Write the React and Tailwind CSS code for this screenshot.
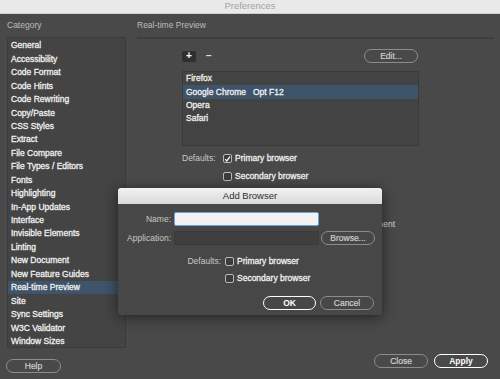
import React from "react";

const categories = [
    "General",
    "Accessibility",
    "Code Format",
    "Code Hints",
    "Code Rewriting",
    "Copy/Paste",
    "CSS Styles",
    "Extract",
    "File Compare",
    "File Types / Editors",
    "Fonts",
    "Highlighting",
    "In-App Updates",
    "Interface",
    "Invisible Elements",
    "Linting",
    "New Document",
    "New Feature Guides",
    "Real-time Preview",
    "Site",
    "Sync Settings",
    "W3C Validator",
    "Window Sizes",
];

const browsers = [
    { name: "Firefox", key: "" },
    { name: "Google Chrome", key: "Opt F12" },
    { name: "Opera", key: "" },
    { name: "Safari", key: "" },
];

const Checkbox = ({ checked }) => (
    <span className="w-[9px] h-[9px] rounded-[2px] border border-[#b8b8b8] bg-[#3c3c3c] flex items-center justify-center shrink-0">
        {checked && (
            <svg width="8" height="8" viewBox="0 0 8 8">
                <path d="M1.3 4.2 L3.2 6.2 L6.8 1.2" fill="none" stroke="#ffffff" strokeWidth="1.4" />
            </svg>
        )}
    </span>
);

const PillButton = ({ children, primary, className = "" }) => (
    <div
        className={`h-[14px] rounded-full flex items-center justify-center text-[8.5px] ${
            primary
                ? "border-[1.5px] border-white text-white font-bold"
                : "border-[1.5px] border-[#8c8c8c] text-[#cfcfcf] [-webkit-text-stroke:0.2px]"
        } ${className}`}
    >
        {children}
    </div>
);

const AddBrowserDialog = () => (
    <div className="absolute left-[118px] top-[188px] w-[264px] h-[127px] bg-[#474747] rounded-[3px] shadow-[0_2px_14px_rgba(0,0,0,0.55)] flex flex-col">
        <div className="h-[16px] rounded-t-[3px] bg-gradient-to-b from-[#f2f2f2] to-[#d9d9d9] flex items-center justify-center text-[9.5px] text-[#2e2e2e]">
            Add Browser
        </div>
        <div className="flex items-center mt-[8px] h-[14px]">
            <span className="w-[53px] text-right text-[8.5px] text-[#c8c8c8]">Name:</span>
            <div className="ml-[3px] w-[145px] h-[14px] bg-[#f2f2f2] border-[1.5px] border-[#6fa3dc] rounded-[2px]" />
        </div>
        <div className="flex items-center mt-[5px] h-[14px]">
            <span className="w-[53px] text-right text-[8.5px] text-[#c8c8c8]">Application:</span>
            <div className="ml-[3px] w-[145px] h-[14px] bg-[#3f3f3f] border border-[#3a3a3a]" />
            <PillButton className="ml-[2px] w-[54px]">Browse...</PillButton>
        </div>
        <div className="flex items-center mt-[11px] h-[11px]">
            <span className="w-[103px] text-right text-[8.5px] text-[#c8c8c8]">Defaults:</span>
            <span className="ml-[4px]"><Checkbox /></span>
            <span className="ml-[3px] text-[8.5px] text-[#f0f0f0] [-webkit-text-stroke:0.3px]">Primary browser</span>
        </div>
        <div className="flex items-center mt-[6px] h-[11px] pl-[107px]">
            <Checkbox />
            <span className="ml-[3px] text-[8.5px] text-[#f0f0f0] [-webkit-text-stroke:0.3px]">Secondary browser</span>
        </div>
        <div className="flex mt-[12px] pl-[145px] gap-[4px]">
            <PillButton primary className="w-[53px]">OK</PillButton>
            <PillButton className="w-[54px]">Cancel</PillButton>
        </div>
    </div>
);

export default function App() {
    return (
        <div className="relative w-[500px] h-[379px] overflow-hidden bg-[#494949] font-['Liberation_Sans',Arial,sans-serif] text-[8.5px] text-[#f0f0f0]">
            <div className="h-[14px] bg-[#e9e9e9] border-b border-[#cfcfcf] flex items-center justify-center text-[9.5px] text-[#a3a3a3]">
                Preferences
            </div>

            <div className="flex">
                <div className="w-[137px] pl-[7px] flex flex-col">
                    <div className="h-[23px] flex items-center text-[#bdbdbd]">Category</div>
                    <div className="w-[119px] h-[311px] bg-[#444444] border border-[#3b3b3b] rounded-[2px] pt-[1px] [-webkit-text-stroke:0.3px]">
                        {categories.map((c) => (
                            <div
                                key={c}
                                className={`h-[13.45px] flex items-center pl-[3px] ${
                                    c === "Real-time Preview" ? "bg-[#3e546b]" : ""
                                }`}
                            >
                                {c}
                            </div>
                        ))}
                    </div>
                    <div className="mt-[11px] -ml-[1px]">
                        <PillButton className="w-[55px]">Help</PillButton>
                    </div>
                </div>

                <div className="w-[357px] flex flex-col">
                    <div className="h-[23px] flex items-center text-[#bdbdbd]">Real-time Preview</div>
                    <div className="h-[2px] bg-[#3e3e3e]" />

                    <div className="pl-[45px] flex flex-col">
                        <div className="mt-[10px] h-[14px] flex items-center">
                            <div className="w-[14px] h-[11px] bg-[#2f2f2f] rounded-[2px] flex items-center justify-center text-white font-bold text-[10px] leading-none">
                                +
                            </div>
                            <span className="ml-[10px] text-[#e0e0e0] font-bold text-[10px] leading-none">−</span>
                            <PillButton className="ml-auto mr-[76px] w-[54px]">Edit...</PillButton>
                        </div>

                        <div className="mt-[8px] w-[237px] h-[75px] bg-[#434343] border border-[#3a3a3a] [-webkit-text-stroke:0.3px]">
                            {browsers.map((b) => (
                                <div
                                    key={b.name}
                                    className={`h-[13.3px] flex items-center pl-[3px] ${
                                        b.key ? "bg-[#3e546b]" : ""
                                    }`}
                                >
                                    <span className="w-[67px]">{b.name}</span>
                                    <span>{b.key}</span>
                                </div>
                            ))}
                        </div>

                        <div className="mt-[7px] h-[11px] flex items-center">
                            <span className="w-[41px] text-[#c8c8c8]">Defaults:</span>
                            <Checkbox checked />
                            <span className="ml-[3px] [-webkit-text-stroke:0.3px]">Primary browser</span>
                        </div>
                        <div className="mt-[7px] h-[11px] flex items-center pl-[41px]">
                            <Checkbox />
                            <span className="ml-[3px] [-webkit-text-stroke:0.3px]">Secondary browser</span>
                        </div>

                        <div className="mt-[37px] h-[11px] flex items-center">
                            <span className="w-[213px] text-right text-[#d8d8d8]">Preview using temporary file for current document</span>
                        </div>
                    </div>

                    <div className="mt-auto mb-[5px] flex justify-end gap-[6px] pr-[6px]">
                        <PillButton className="w-[54px]">Close</PillButton>
                        <PillButton primary className="w-[54px]">Apply</PillButton>
                    </div>
                </div>
            </div>

            <AddBrowserDialog />
        </div>
    );
}
